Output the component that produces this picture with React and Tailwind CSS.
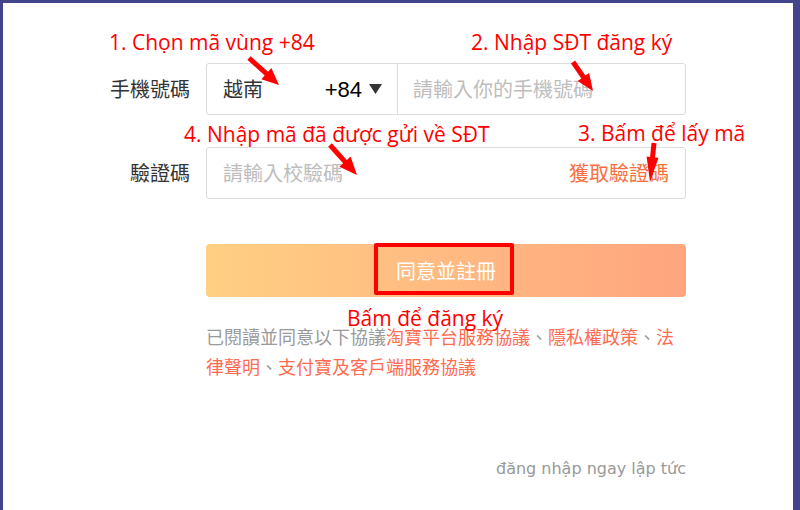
import React from "react";

const cjk = { fontFamily: '"Noto Sans CJK TC", "Noto Sans", sans-serif' };
const note = { fontFamily: '"Open Sans", "Noto Sans", sans-serif' };

function arrowPoints([x1, y1], [x2, y2], shaft, headLen, headW) {
    const dx = x2 - x1;
    const dy = y2 - y1;
    const len = Math.hypot(dx, dy);
    const ux = dx / len;
    const uy = dy / len;
    const nx = -uy;
    const ny = ux;
    const bx = x2 - ux * headLen;
    const by = y2 - uy * headLen;
    const pts = [
        [x1 + (nx * shaft) / 2, y1 + (ny * shaft) / 2],
        [bx + (nx * shaft) / 2, by + (ny * shaft) / 2],
        [bx + (nx * headW) / 2, by + (ny * headW) / 2],
        [x2, y2],
        [bx - (nx * headW) / 2, by - (ny * headW) / 2],
        [bx - (nx * shaft) / 2, by - (ny * shaft) / 2],
        [x1 - (nx * shaft) / 2, y1 - (ny * shaft) / 2],
    ];
    return pts.map((p) => p.join(",")).join(" ");
}

const arrows = [
    { from: [249, 58], to: [279, 85], shaft: 5, head: 17, w: 15 },
    { from: [573, 62], to: [593, 91], shaft: 5, head: 17, w: 14 },
    { from: [654, 143], to: [650, 182], shaft: 5, head: 25, w: 12 },
    { from: [330, 145], to: [357, 175], shaft: 5, head: 18, w: 15 },
];

const notes = [
    { text: "1. Chọn mã vùng +84", className: "left-[109px] top-[30px]" },
    { text: "2. Nhập SĐT đăng ký", className: "left-[471px] top-[30px]" },
    { text: "4. Nhập mã đã được gửi về SĐT", className: "left-[184px] top-[122px]" },
    { text: "3. Bấm để lấy mã", className: "left-[578px] top-[121px]" },
    { text: "Bấm để đăng ký", className: "left-[347px] top-[306px]" },
];

function FormRow({ label, children, className = "" }) {
    return (
        <div className={`flex items-center ${className}`}>
            <div className="w-[203px] pr-4 text-right text-[20px] text-[#333]">{label}</div>
            {children}
        </div>
    );
}

function Annotations() {
    return (
        <div className="absolute inset-0 pointer-events-none">
            {notes.map((n) => (
                <div
                    key={n.text}
                    className={`absolute whitespace-nowrap text-[21px] leading-[25px] text-[#ff0000] ${n.className}`}
                    style={note}
                >
                    {n.text}
                </div>
            ))}
            <div className="absolute left-[374px] top-[243px] w-[140px] h-[52px] border-4 border-[#ff0000] rounded-[2px]" />
            <svg className="absolute inset-0" width="800" height="510" viewBox="0 0 800 510">
                {arrows.map((a, i) => (
                    <polygon key={i} points={arrowPoints(a.from, a.to, a.shaft, a.head, a.w)} fill="#ff0000" />
                ))}
            </svg>
        </div>
    );
}

export default function App() {
    return (
        <div className="relative w-[800px] h-[510px] overflow-hidden bg-[#43448c] pl-[3px] pt-[3px] pr-[7px]" style={cjk}>
            <div className="h-full bg-white pt-[60px]">
                <FormRow label="手機號碼">
                    <div className="flex w-[480px] h-[52px] rounded-[3px] border border-[#dcdcdc]">
                        <div className="flex w-[191px] items-center justify-between border-r border-[#dcdcdc] pl-4 pr-[15px]">
                            <span className="text-[20px] text-[#333]">越南</span>
                            <span className="flex items-center gap-[7px]">
                                <span className="text-[22px] text-black" style={{ fontFamily: '"Liberation Sans", Arial, sans-serif' }}>
                                    +84
                                </span>
                                <svg width="13" height="10" viewBox="0 0 13 10">
                                    <polygon points="0,0 13,0 6.5,10" fill="#333" />
                                </svg>
                            </span>
                        </div>
                        <div className="flex flex-1 items-center pl-[15px] text-[20px] text-[#bdbdbd]">請輸入你的手機號碼</div>
                    </div>
                </FormRow>

                <FormRow label="驗證碼" className="mt-[32px]">
                    <div className="flex w-[480px] h-[52px] items-center justify-between rounded-[3px] border border-[#dcdcdc] pl-4 pr-4">
                        <span className="text-[20px] text-[#bdbdbd]">請輸入校驗碼</span>
                        <span className="text-[20px] text-[#f8703f]">獲取驗證碼</span>
                    </div>
                </FormRow>

                <div className="ml-[203px] mt-[45px] flex w-[480px] h-[53px] items-center justify-center rounded-[4px] bg-gradient-to-r from-[#ffcf83] to-[#ffa57f] text-[20px] text-white">
                    同意並註冊
                </div>

                <p className="ml-[203px] mt-[24px] w-[480px] text-[18px] leading-[30px] text-[#9a9a9a]">
                    已閱讀並同意以下協議
                    <span className="text-[#ff6b50]">淘寶平台服務協議</span>、
                    <span className="text-[#ff6b50]">隱私權政策</span>、
                    <span className="text-[#ff6b50]">法律聲明</span>、
                    <span className="text-[#ff6b50]">支付寶及客戶端服務協議</span>
                </p>

                <div
                    className="ml-[203px] mt-[76px] w-[480px] text-right text-[16px] leading-[24px] text-[#999]"
                    style={{ fontFamily: '"DejaVu Sans", Verdana, sans-serif' }}
                >
                    đăng nhập ngay lập tức
                </div>
            </div>
            <Annotations />
        </div>
    );
}
